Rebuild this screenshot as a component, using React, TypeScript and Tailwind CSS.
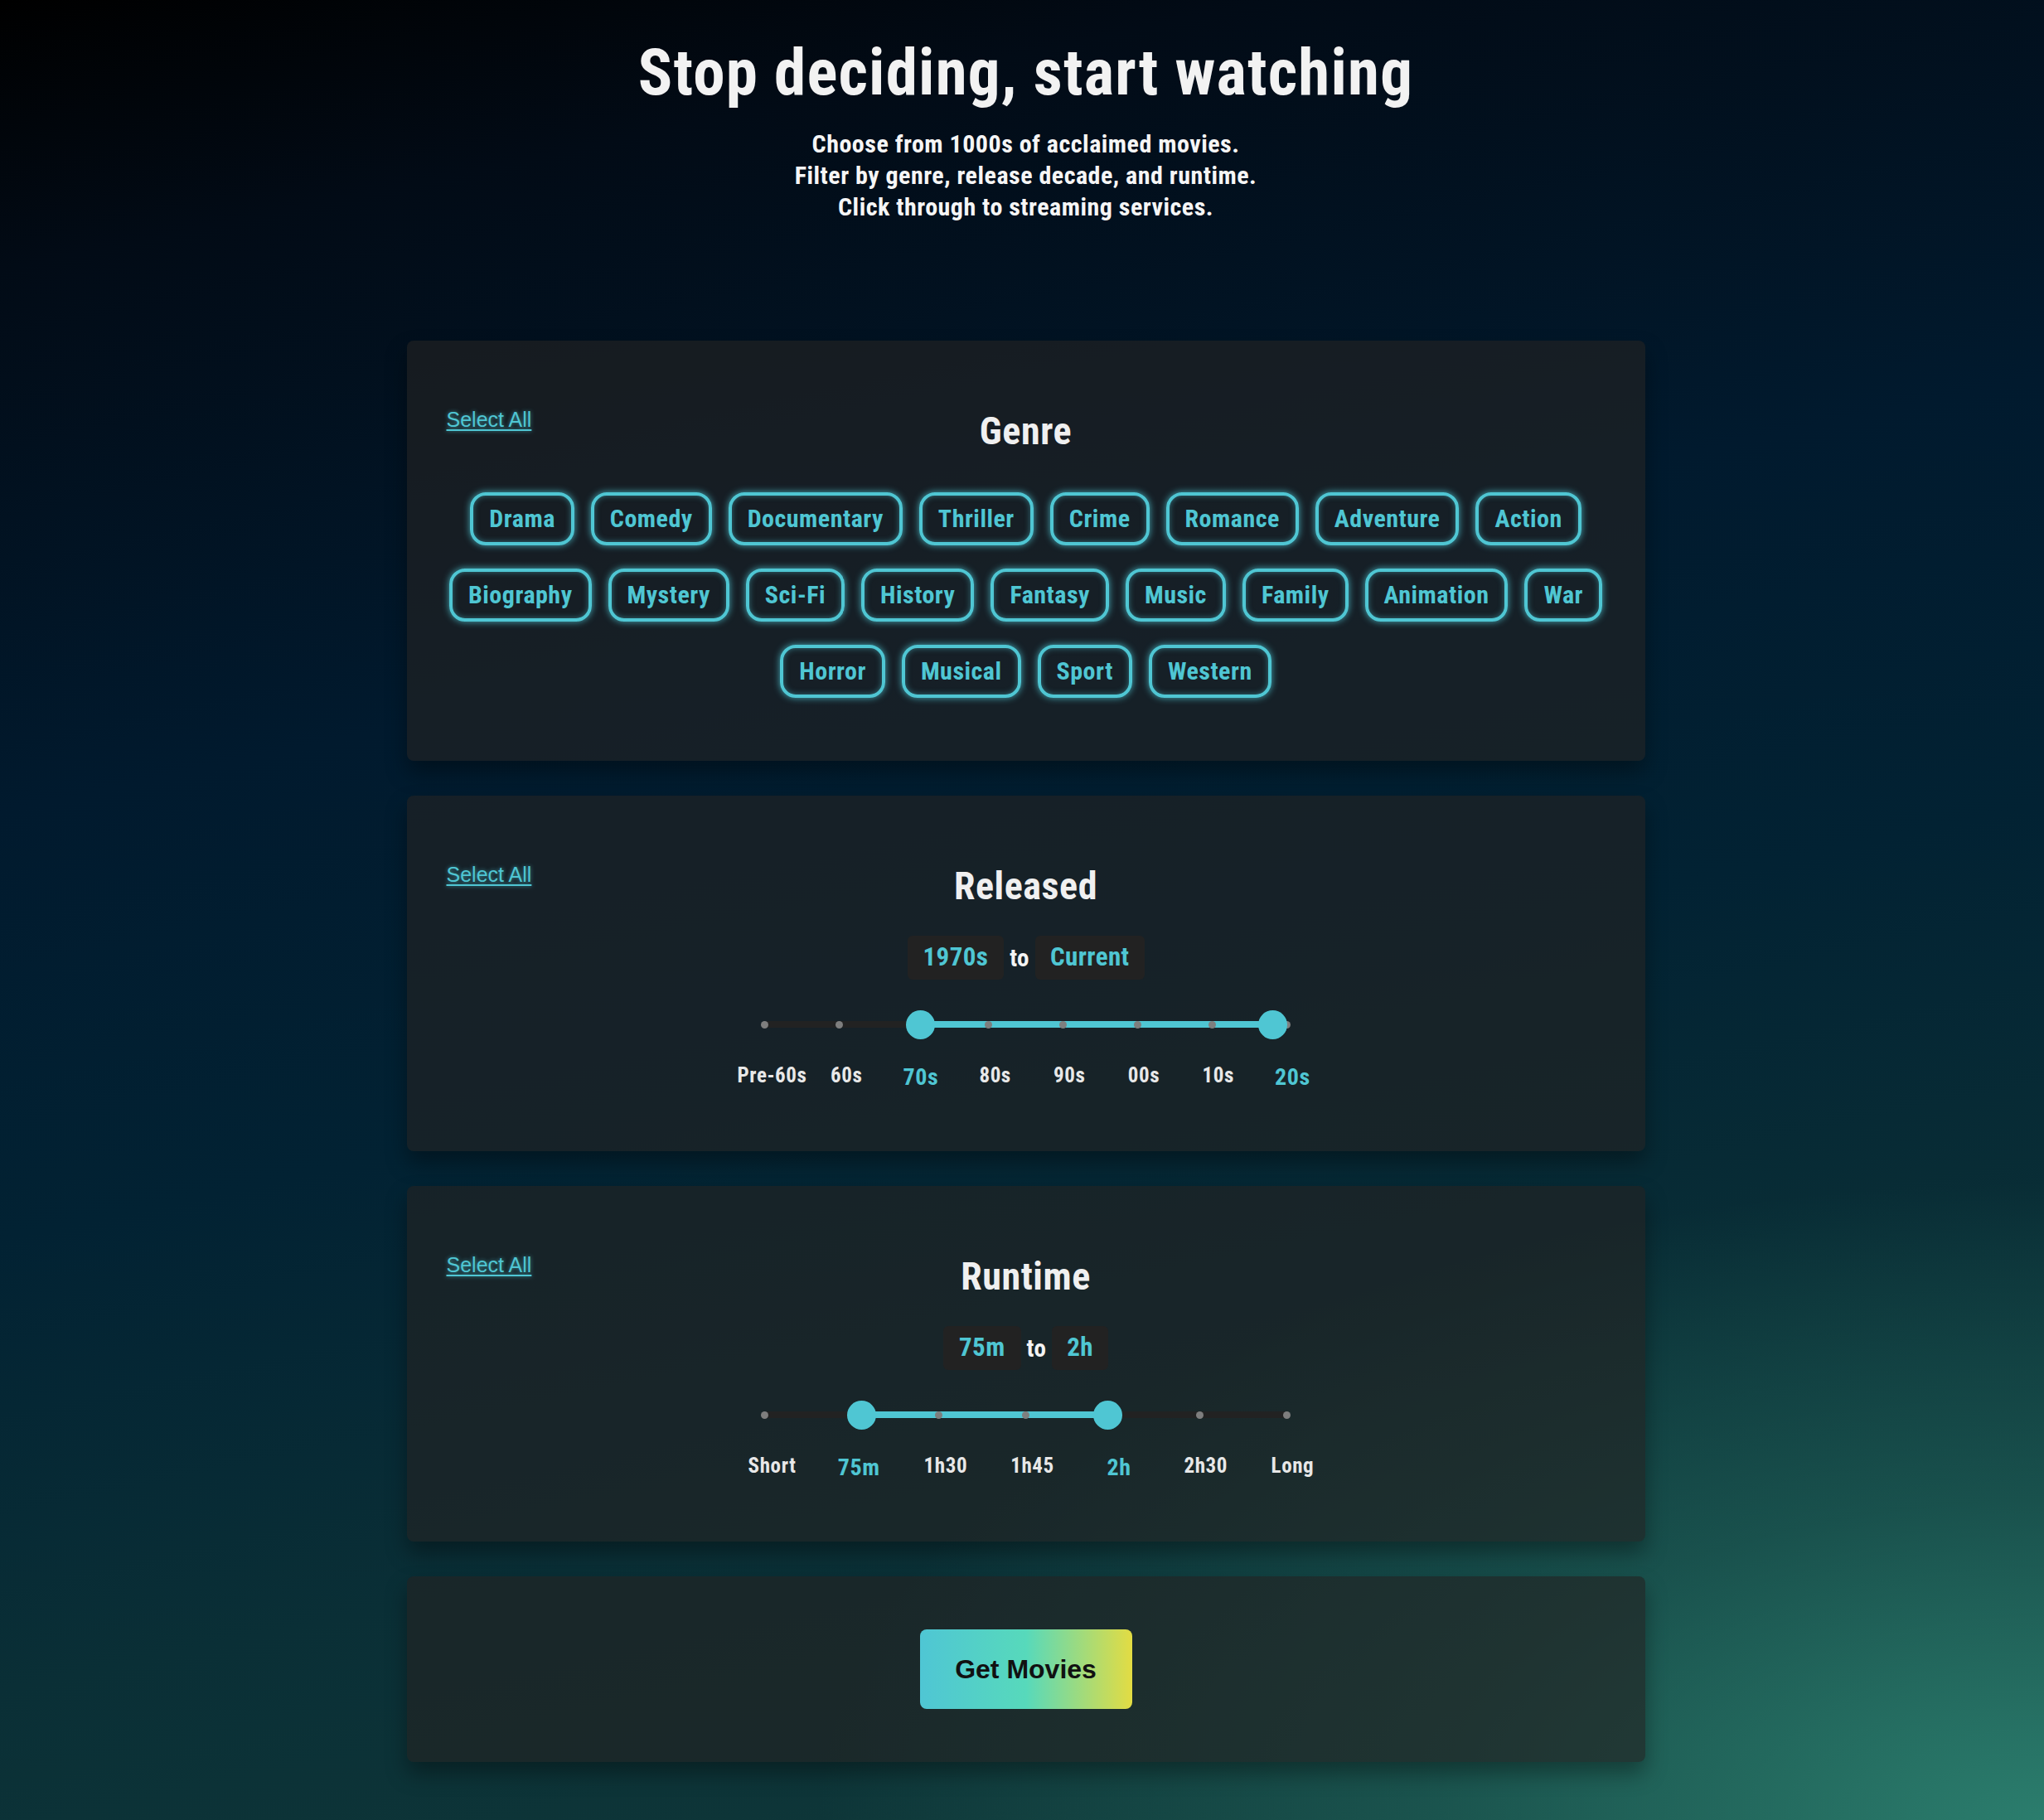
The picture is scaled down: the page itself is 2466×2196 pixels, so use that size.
import React from 'react';

const NARROW = "font-['Roboto_Condensed','DejaVu_Sans_Condensed',sans-serif] [font-stretch:condensed]";
const ARIAL = "font-['Liberation_Sans',Arial,sans-serif]";

const genreRows = [
  ['Drama', 'Comedy', 'Documentary', 'Thriller', 'Crime', 'Romance', 'Adventure', 'Action'],
  ['Biography', 'Mystery', 'Sci-Fi', 'History', 'Fantasy', 'Music', 'Family', 'Animation', 'War'],
  ['Horror', 'Musical', 'Sport', 'Western'],
];

const decades = ['Pre-60s', '60s', '70s', '80s', '90s', '00s', '10s', '20s'];
const runtimes = ['Short', '75m', '1h30', '1h45', '2h', '2h30', 'Long'];

const TRACK_W = 630;
const THUMB = 35;

const SelectAll = () => (
  <a
    href="#"
    className={`${ARIAL} -mt-[3px] justify-self-start text-[25px] text-[#4fc6d3] underline underline-offset-[3px] decoration-[2px] [text-shadow:0_0_5px_rgba(79,198,211,0.7)]`}
  >
    Select All
  </a>
);

const CardHeader = ({ title }: { title: string }) => (
  <div className="grid grid-cols-[1fr_auto_1fr] items-start">
    <SelectAll />
    <h2 className={`${NARROW} mt-[6px] text-[46px] leading-none font-bold tracking-[0.6px] text-[#f0f0f0]`}>{title}</h2>
    <div />
  </div>
);

const Card = ({ children, className = '' }: { children: React.ReactNode; className?: string }) => (
  <section
    className={`w-[1494px] rounded-lg bg-[rgba(34,34,34,0.64)] shadow-[0_14px_26px_rgba(0,0,0,0.35)] px-12 ${className}`}
  >
    {children}
  </section>
);

const RangeBox = ({ from, to }: { from: string; to: string }) => (
  <div className={`${NARROW} mt-[37px] flex items-center justify-center font-bold tracking-[0.4px]`}>
    <span className="flex h-[53px] items-center rounded-md bg-[#222222] px-[19px] text-[31px] text-[#4fc6d3]">{from}</span>
    <span className="mx-[7px] mt-[3px] text-[29px] text-[#f4f4f4]">to</span>
    <span className="flex h-[53px] items-center rounded-md bg-[#222222] px-[18px] text-[31px] text-[#4fc6d3]">{to}</span>
  </div>
);

const Slider = ({ labels, lo, hi }: { labels: string[]; lo: number; hi: number }) => {
  const n = labels.length - 1;
  const thumbLeft = (i: number) => (i / n) * (TRACK_W - THUMB);
  const loX = thumbLeft(lo) + THUMB / 2;
  const hiX = thumbLeft(hi) + THUMB / 2;
  return (
    <div className="flex flex-col items-center">
      <div className="relative mt-[36px] h-[36px] w-[630px]">
        <div className="absolute left-0 right-0 top-[14px] h-[8px] rounded-full bg-[#222222]" />
        <div className="absolute top-[14px] h-[8px] bg-[#4fc6d3]" style={{ left: loX, width: hiX - loX }} />
        {labels.map((l, i) => (
          <div
            key={l}
            className="absolute top-[13.5px] h-[9px] w-[9px] rounded-full bg-[#7e7e7e]"
            style={{ left: (i / n) * TRACK_W - 4.5 }}
          />
        ))}
        {[lo, hi].map((i) => (
          <div
            key={i}
            className="absolute top-[0.5px] h-[35px] w-[35px] rounded-full bg-[#4fc6d3]"
            style={{ left: thumbLeft(i) }}
          />
        ))}
      </div>
      <div className={`${NARROW} mt-[30px] flex h-[28px] w-[628px] translate-x-[8px] justify-between font-bold tracking-[0.6px]`}>
        {labels.map((l, i) => {
          const active = i === lo || i === hi;
          return (
            <div key={l} className="flex w-0 justify-center">
              <span
                className={
                  active
                    ? 'whitespace-nowrap pt-[2px] text-[28px] leading-[28px] text-[#4fc6d3]'
                    : 'whitespace-nowrap text-[25px] leading-[28px] text-[#e8e8e8]'
                }
              >
                {l}
              </span>
            </div>
          );
        })}
      </div>
    </div>
  );
};

export default function App() {
  return (
    <div
      className={`${NARROW} min-h-screen w-full pl-[9px] pb-[70px] bg-[radial-gradient(ellipse_60%_35%_at_100%_100%,#2b7d6d_0%,rgba(43,125,109,0.4)_50%,rgba(43,125,109,0)_100%),linear-gradient(168deg,#000000_0%,#020b16_12%,#011a2e_36%,#022233_55%,#0a2f36_75%,#113b3a_100%)]`}
    >
      <header className="flex flex-col items-center pt-[50px]">
        <h1 className="text-[77px] leading-none font-bold tracking-[1.2px] text-[#f2f2f2]">Stop deciding, start watching</h1>
        <p className="mt-[28px] text-center text-[30px] leading-[38px] font-bold tracking-[0.5px] text-[#f6f6f6]">
          Choose from 1000s of acclaimed movies.
          <br />
          Filter by genre, release decade, and runtime.
          <br />
          Click through to streaming services.
        </p>
      </header>

      <main className="mt-[142px] flex flex-col items-center gap-[42px]">
        <Card className="pt-[80px] pb-[76px]">
          <CardHeader title="Genre" />
          <div className="mt-[51px] flex flex-col items-center gap-[28px]">
            {genreRows.map((row, r) => (
              <div key={r} className="flex justify-center gap-[20px] whitespace-nowrap">
                {row.map((g) => (
                  <button
                    key={g}
                    className="rounded-[19px] border-[4px] border-[#4fc6d3] px-[19px] py-[10px] text-[30px] leading-[36px] font-bold tracking-[0.5px] text-[#4fc6d3] shadow-[0_0_9px_rgba(79,198,211,0.85),inset_0_0_7px_rgba(79,198,211,0.5)]"
                  >
                    {g}
                  </button>
                ))}
              </div>
            ))}
          </div>
        </Card>

        <Card className="pt-[80px] pb-[77px]">
          <CardHeader title="Released" />
          <RangeBox from="1970s" to="Current" />
          <Slider labels={decades} lo={2} hi={7} />
        </Card>

        <Card className="pt-[80px] pb-[77px]">
          <CardHeader title="Runtime" />
          <RangeBox from="75m" to="2h" />
          <Slider labels={runtimes} lo={1} hi={4} />
        </Card>

        <Card className="flex justify-center py-[64px]">
          <button
            className={`${ARIAL} h-[96px] w-[256px] rounded-lg bg-[linear-gradient(90deg,#4fc6d4_0%,#57d9bb_50%,#e3dc43_100%)] text-[32px] font-bold text-[#111111]`}
          >
            Get Movies
          </button>
        </Card>
      </main>
    </div>
  );
}
